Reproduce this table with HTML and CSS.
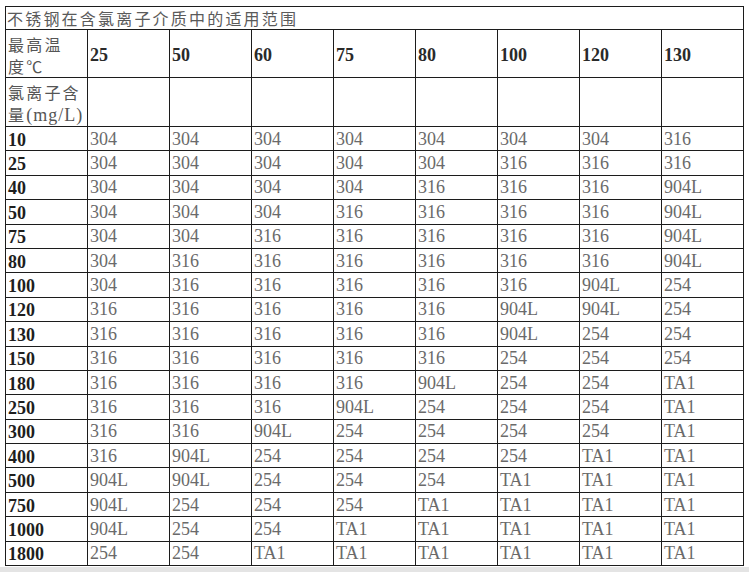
FILE: index.html
```html
<!DOCTYPE html>
<html lang="zh">
<head>
<meta charset="utf-8">
<title>不锈钢在含氯离子介质中的适用范围</title>
<link rel="stylesheet" href="styles.css">
</head>
<body>
<div class="page">
<table class="grid">
<colgroup>
<col class="c"><col class="c"><col class="c"><col class="c"><col class="c"><col class="c"><col class="c"><col class="c"><col class="c">
</colgroup>
<tr class="title-row"><td colspan="9" class="title">不锈钢在含氯离子介质中的适用范围</td></tr>
<tr class="head-row"><td class="cjk">最高温<br>度℃</td><td class="hn">25</td><td class="hn">50</td><td class="hn">60</td><td class="hn">75</td><td class="hn">80</td><td class="hn">100</td><td class="hn">120</td><td class="hn">130</td></tr>
<tr class="head-row2"><td class="cjk">氯离子含<br>量<span class="unit">(mg/L)</span></td><td></td><td></td><td></td><td></td><td></td><td></td><td></td><td></td></tr>
<tr><th>10</th><td>304</td><td>304</td><td>304</td><td>304</td><td>304</td><td>304</td><td>304</td><td>316</td></tr>
<tr><th>25</th><td>304</td><td>304</td><td>304</td><td>304</td><td>304</td><td>316</td><td>316</td><td>316</td></tr>
<tr><th>40</th><td>304</td><td>304</td><td>304</td><td>304</td><td>316</td><td>316</td><td>316</td><td>904L</td></tr>
<tr><th>50</th><td>304</td><td>304</td><td>304</td><td>316</td><td>316</td><td>316</td><td>316</td><td>904L</td></tr>
<tr><th>75</th><td>304</td><td>304</td><td>316</td><td>316</td><td>316</td><td>316</td><td>316</td><td>904L</td></tr>
<tr><th>80</th><td>304</td><td>316</td><td>316</td><td>316</td><td>316</td><td>316</td><td>316</td><td>904L</td></tr>
<tr><th>100</th><td>304</td><td>316</td><td>316</td><td>316</td><td>316</td><td>316</td><td>904L</td><td>254</td></tr>
<tr><th>120</th><td>316</td><td>316</td><td>316</td><td>316</td><td>316</td><td>904L</td><td>904L</td><td>254</td></tr>
<tr><th>130</th><td>316</td><td>316</td><td>316</td><td>316</td><td>316</td><td>904L</td><td>254</td><td>254</td></tr>
<tr><th>150</th><td>316</td><td>316</td><td>316</td><td>316</td><td>316</td><td>254</td><td>254</td><td>254</td></tr>
<tr><th>180</th><td>316</td><td>316</td><td>316</td><td>316</td><td>904L</td><td>254</td><td>254</td><td>TA1</td></tr>
<tr><th>250</th><td>316</td><td>316</td><td>316</td><td>904L</td><td>254</td><td>254</td><td>254</td><td>TA1</td></tr>
<tr><th>300</th><td>316</td><td>316</td><td>904L</td><td>254</td><td>254</td><td>254</td><td>254</td><td>TA1</td></tr>
<tr><th>400</th><td>316</td><td>904L</td><td>254</td><td>254</td><td>254</td><td>254</td><td>TA1</td><td>TA1</td></tr>
<tr><th>500</th><td>904L</td><td>904L</td><td>254</td><td>254</td><td>254</td><td>TA1</td><td>TA1</td><td>TA1</td></tr>
<tr><th>750</th><td>904L</td><td>254</td><td>254</td><td>254</td><td>TA1</td><td>TA1</td><td>TA1</td><td>TA1</td></tr>
<tr><th>1000</th><td>904L</td><td>254</td><td>254</td><td>TA1</td><td>TA1</td><td>TA1</td><td>TA1</td><td>TA1</td></tr>
<tr><th>1800</th><td>254</td><td>254</td><td>TA1</td><td>TA1</td><td>TA1</td><td>TA1</td><td>TA1</td><td>TA1</td></tr>
</table>
<div class="strip"></div>
</div>
</body>
</html>
```
FILE: styles.css
```css
html, body {
  margin: 0;
  padding: 0;
  background: #ffffff;
}
.page {
  width: 749px;
  height: 572px;
  overflow: hidden;
  padding-top: 6px;
  box-sizing: border-box;
  display: flex;
  flex-direction: column;
}
.grid {
  margin-left: 5px;
  border-collapse: collapse;
  table-layout: fixed;
  width: 739px;
  font-family: "Liberation Serif", "Times New Roman", serif;
  flex: none;
}
.c {
  width: 82px;
}
.grid tr {
  height: 24.4px;
}
.grid td, .grid th {
  border: 1.5px solid #1c1c1c;
  padding: 0 0 0 2px;
  text-align: left;
  vertical-align: middle;
  font-size: 18px;
  line-height: 20px;
  color: #6a6a6a;
  font-weight: normal;
  white-space: nowrap;
  overflow: hidden;
}
.grid th {
  color: #1e1e1e;
  font-weight: bold;
  padding-top: 2px;
}
.grid tr.title-row {
  height: 23px;
}
.title-row td.title {
  font-family: "Noto Sans CJK SC", "Noto Sans", sans-serif;
  font-size: 16px;
  letter-spacing: 2.2px;
  color: #5a5a5a;
  line-height: 20px;
  padding-left: 1px;
}
.grid tr.head-row {
  height: 48px;
}
.grid tr.head-row2 {
  height: 49px;
}
.grid td.cjk {
  font-family: "Noto Sans CJK SC", "Noto Sans", sans-serif;
  font-size: 16px;
  letter-spacing: 2.2px;
  line-height: 22px;
  color: #555555;
  vertical-align: top;
  padding-top: 3px;
}
.unit {
  font-family: "Liberation Serif", "Times New Roman", serif;
  font-size: 18px;
  letter-spacing: 1px;
}
.grid td.hn {
  color: #2a2a2a;
  font-weight: bold;
  padding-top: 3px;
}
.strip {
  flex: 1;
  margin-top: 1px;
  background: #e4e4e4;
}
```
